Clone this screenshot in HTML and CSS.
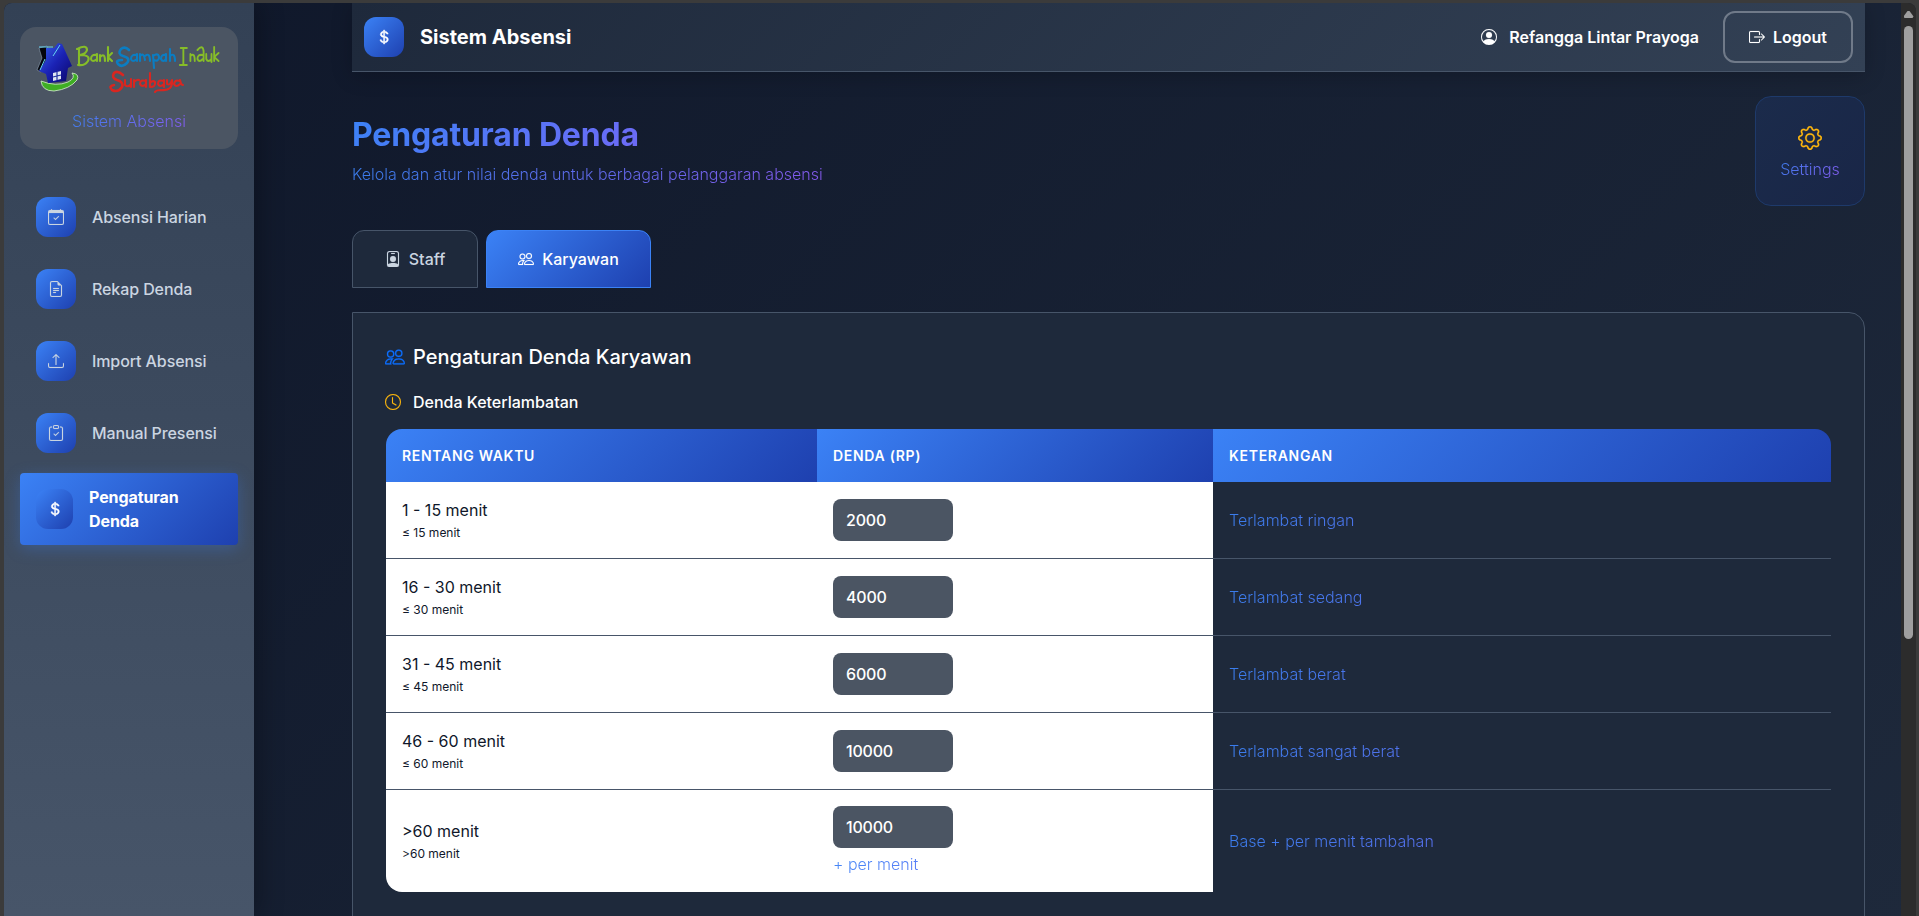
FILE: index.html
```html
<!DOCTYPE html>
<html lang="id">
<head>
<meta charset="utf-8">
<title>Pengaturan Denda</title>
<link rel="stylesheet" href="styles.css">
</head>
<body>
<svg class="sprite" aria-hidden="true">
  <symbol id="dollar" viewBox="0 0 16 16"><path d="M4 10.781c.148 1.667 1.513 2.85 3.591 3.003V15h1.043v-1.216c2.27-.179 3.678-1.438 3.678-3.3 0-1.59-.947-2.51-2.956-3.028l-.722-.187V3.467c1.122.11 1.879.714 2.07 1.616h1.47c-.166-1.6-1.54-2.748-3.54-2.875V1H7.591v1.233c-1.939.23-3.27 1.472-3.27 3.156 0 1.454.966 2.483 2.661 2.917l.61.162v4.031c-1.149-.17-1.94-.8-2.131-1.718H4zm3.391-3.836c-1.043-.263-1.6-.825-1.6-1.616 0-.944.704-1.641 1.8-1.828v3.495l-.2-.05zm1.591 1.872c1.287.323 1.852.859 1.852 1.769 0 1.097-.826 1.828-2.2 1.939V8.73l.348.086z"/></symbol>
  <symbol id="calendar" viewBox="0 0 16 16"><path d="M10.854 7.146a.5.5 0 0 1 0 .708l-3 3a.5.5 0 0 1-.708 0l-1.5-1.5a.5.5 0 1 1 .708-.708L7.5 9.793l2.646-2.647a.5.5 0 0 1 .708 0z"/><path d="M3.5 0a.5.5 0 0 1 .5.5V1h8V.5a.5.5 0 0 1 1 0V1h1a2 2 0 0 1 2 2v11a2 2 0 0 1-2 2H2a2 2 0 0 1-2-2V3a2 2 0 0 1 2-2h1V.5a.5.5 0 0 1 .5-.5zM1 4v10a1 1 0 0 0 1 1h12a1 1 0 0 0 1-1V4H1z"/></symbol>
  <symbol id="file" viewBox="0 0 16 16"><path d="M5.5 7a.5.5 0 0 0 0 1h5a.5.5 0 0 0 0-1h-5zM5 9.5a.5.5 0 0 1 .5-.5h5a.5.5 0 0 1 0 1h-5a.5.5 0 0 1-.5-.5zm0 2a.5.5 0 0 1 .5-.5h2a.5.5 0 0 1 0 1h-2a.5.5 0 0 1-.5-.5z"/><path d="M9.5 0H4a2 2 0 0 0-2 2v12a2 2 0 0 0 2 2h8a2 2 0 0 0 2-2V4.5L9.5 0zm0 1v2A1.5 1.5 0 0 0 11 4.5h2V14a1 1 0 0 1-1 1H4a1 1 0 0 1-1-1V2a1 1 0 0 1 1-1h5.5z"/></symbol>
  <symbol id="upload" viewBox="0 0 16 16"><path d="M.5 9.9a.5.5 0 0 1 .5.5v2.5a1 1 0 0 0 1 1h12a1 1 0 0 0 1-1v-2.5a.5.5 0 0 1 1 0v2.5a2 2 0 0 1-2 2H2a2 2 0 0 1-2-2v-2.5a.5.5 0 0 1 .5-.5z"/><path d="M7.646 1.146a.5.5 0 0 1 .708 0l3 3a.5.5 0 0 1-.708.708L8.5 2.707V11.5a.5.5 0 0 1-1 0V2.707L5.354 4.854a.5.5 0 1 1-.708-.708l3-3z"/></symbol>
  <symbol id="clipboard" viewBox="0 0 16 16"><path d="M10.854 7.146a.5.5 0 0 1 0 .708l-3 3a.5.5 0 0 1-.708 0l-1.5-1.5a.5.5 0 1 1 .708-.708L7.5 9.793l2.646-2.647a.5.5 0 0 1 .708 0z"/><path d="M4 1.5H3a2 2 0 0 0-2 2V14a2 2 0 0 0 2 2h10a2 2 0 0 0 2-2V3.5a2 2 0 0 0-2-2h-1v1h1a1 1 0 0 1 1 1V14a1 1 0 0 1-1 1H3a1 1 0 0 1-1-1V3.5a1 1 0 0 1 1-1h1v-1z"/><path d="M9.5 1a.5.5 0 0 1 .5.5v1a.5.5 0 0 1-.5.5h-3a.5.5 0 0 1-.5-.5v-1a.5.5 0 0 1 .5-.5h3zm-3-1A1.5 1.5 0 0 0 5 1.5v1A1.5 1.5 0 0 0 6.5 4h3A1.5 1.5 0 0 0 11 2.5v-1A1.5 1.5 0 0 0 9.5 0h-3z"/></symbol>
  <symbol id="person" viewBox="0 0 16 16"><path d="M11 6a3 3 0 1 1-6 0 3 3 0 0 1 6 0z"/><path fill-rule="evenodd" d="M0 8a8 8 0 1 1 16 0A8 8 0 0 1 0 8zm8-7a7 7 0 0 0-5.468 11.37C3.242 11.226 4.805 10 8 10s4.757 1.225 5.468 2.37A7 7 0 0 0 8 1z"/></symbol>
  <symbol id="logout" viewBox="0 0 16 16"><path d="M10 12.5a.5.5 0 0 1-.5.5h-8a.5.5 0 0 1-.5-.5v-9a.5.5 0 0 1 .5-.5h8a.5.5 0 0 1 .5.5v2a.5.5 0 0 0 1 0v-2A1.5 1.5 0 0 0 9.5 2h-8A1.5 1.5 0 0 0 0 3.5v9A1.5 1.5 0 0 0 1.5 14h8a1.5 1.5 0 0 0 1.5-1.5v-2a.5.5 0 0 0-1 0v2z"/><path d="M15.854 8.354a.5.5 0 0 0 0-.708l-3-3a.5.5 0 0 0-.708.708L14.293 7.5H5.5a.5.5 0 0 0 0 1h8.793l-2.147 2.146a.5.5 0 0 0 .708.708l3-3z"/></symbol>
  <symbol id="gear" viewBox="0 0 16 16"><path d="M8 4.754a3.246 3.246 0 1 0 0 6.492 3.246 3.246 0 0 0 0-6.492zM5.754 8a2.246 2.246 0 1 1 4.492 0 2.246 2.246 0 0 1-4.492 0z"/><path d="M9.796 1.343c-.527-1.79-3.065-1.79-3.592 0l-.094.319a.873.873 0 0 1-1.255.52l-.292-.16c-1.64-.892-3.433.902-2.54 2.541l.159.292a.873.873 0 0 1-.52 1.255l-.319.094c-1.79.527-1.79 3.065 0 3.592l.319.094a.873.873 0 0 1 .52 1.255l-.16.292c-.892 1.64.901 3.434 2.541 2.54l.292-.159a.873.873 0 0 1 1.255.52l.094.319c.527 1.79 3.065 1.79 3.592 0l.094-.319a.873.873 0 0 1 1.255-.52l.292.16c1.64.893 3.434-.902 2.54-2.541l-.159-.292a.873.873 0 0 1 .52-1.255l.319-.094c1.79-.527 1.79-3.065 0-3.592l-.319-.094a.873.873 0 0 1-.52-1.255l.16-.292c.893-1.64-.902-3.433-2.541-2.54l-.292.159a.873.873 0 0 1-1.255-.52l-.094-.319zm-2.633.283c.246-.835 1.428-.835 1.674 0l.094.319a1.873 1.873 0 0 0 2.693 1.115l.291-.16c.764-.415 1.6.42 1.184 1.185l-.159.292a1.873 1.873 0 0 0 1.116 2.692l.318.094c.835.246.835 1.428 0 1.674l-.319.094a1.873 1.873 0 0 0-1.115 2.693l.16.291c.415.764-.42 1.6-1.185 1.184l-.291-.159a1.873 1.873 0 0 0-2.693 1.116l-.094.318c-.246.835-1.428.835-1.674 0l-.094-.319a1.873 1.873 0 0 0-2.692-1.115l-.292.16c-.764.415-1.6-.42-1.184-1.185l.159-.291A1.873 1.873 0 0 0 1.945 8.93l-.319-.094c-.835-.246-.835-1.428 0-1.674l.319-.094A1.873 1.873 0 0 0 3.06 4.377l-.16-.292c-.415-.764.42-1.6 1.185-1.184l.292.159a1.873 1.873 0 0 0 2.692-1.115l.094-.319z"/></symbol>
  <symbol id="badge" viewBox="0 0 16 16"><path d="M6.5 2a.5.5 0 0 0 0 1h3a.5.5 0 0 0 0-1h-3zM11 8a3 3 0 1 1-6 0 3 3 0 0 1 6 0z"/><path d="M4.5 0A2.5 2.5 0 0 0 2 2.5V14a2 2 0 0 0 2 2h8a2 2 0 0 0 2-2V2.5A2.5 2.5 0 0 0 11.5 0h-7zM3 2.5A1.5 1.5 0 0 1 4.5 1h7A1.5 1.5 0 0 1 13 2.5v10.795a4.2 4.2 0 0 0-.776-.492C11.392 12.387 10.063 12 8 12s-3.392.387-4.224.803a4.2 4.2 0 0 0-.776.492V2.5z"/></symbol>
  <symbol id="people" viewBox="0 0 16 16"><path d="M15 14s1 0 1-1-1-4-5-4-5 3-5 4 1 1 1 1h8zm-7.978-1A.261.261 0 0 1 7 12.996c.001-.264.167-1.03.76-1.72C8.312 10.629 9.282 10 11 10c1.717 0 2.687.63 3.24 1.276.593.69.758 1.457.76 1.72l-.008.002a.274.274 0 0 1-.014.002H7.022zM11 7a2 2 0 1 0 0-4 2 2 0 0 0 0 4zm3-2a3 3 0 1 1-6 0 3 3 0 0 1 6 0zM6.936 9.28a5.88 5.88 0 0 0-1.23-.247A7.35 7.35 0 0 0 5 9c-4 0-5 3-5 4 0 .667.333 1 1 1h4.216A2.238 2.238 0 0 1 5 13c0-1.01.377-2.042 1.09-2.904.243-.294.526-.569.846-.816zM4.92 10A5.493 5.493 0 0 0 4 13H1c0-.26.164-1.03.76-1.724.545-.636 1.492-1.256 3.16-1.275zM1.5 5.5a3 3 0 1 1 6 0 3 3 0 0 1-6 0zm3-2a2 2 0 1 0 0 4 2 2 0 0 0 0-4z"/></symbol>
  <symbol id="clock" viewBox="0 0 16 16"><path d="M8 3.5a.5.5 0 0 0-1 0V9a.5.5 0 0 0 .252.434l3.5 2a.5.5 0 0 0 .496-.868L8 8.71V3.5z"/><path d="M8 16A8 8 0 1 0 8 0a8 8 0 0 0 0 16zm7-8A7 7 0 1 1 1 8a7 7 0 0 1 14 0z"/></symbol>
</svg>

<div class="window">
  <aside class="sidebar">
    <div class="brand">
      <svg class="brand-logo" viewBox="0 0 186 54" width="186" height="54">
        <defs>
          <linearGradient id="house" x1="0" y1="0" x2="1" y2="1"><stop offset="0" stop-color="#3a66f0"/><stop offset=".5" stop-color="#1a22b4"/><stop offset="1" stop-color="#0b0668"/></linearGradient>
        </defs>
        <path d="M5 39 Q6 49 18 49 Q34 47 41 38 Q44 32 36 31 Q40 36 32 40 Q20 45 5 39Z" fill="#3fae24" stroke="#d5efd0" stroke-width=".8"/>
        <path d="M3 6 L11 4 L11 16 L5 30 L1 28 L6 16Z" fill="#04050c" stroke="#9fb4c8" stroke-width=".5"/>
        <path d="M3 29 L10 18 L10 6 L18 6 L22 1 L26 2 L36 24 L32 26 L30 39 L12 41 L10 32Z" fill="url(#house)"/>
        <path d="M3 5 L17 5 M24 3 L17 14 M9 17 L4 28" stroke="#66d4f2" stroke-width="1" fill="none"/>
        <path d="M17 31 L25 29 L25 37 L17 39Z" fill="#dfe6f2"/>
        <path d="M21 30 V38 M17 35 L25 33" stroke="#2030a0" stroke-width="1.2"/>
        <g fill="none" stroke-linecap="round" stroke-linejoin="round" stroke-width="2.1">
          <g stroke="#86bd28">
            <path d="M43 6V23M41 7Q51 2 51 8Q50 12 44 13Q55 13 52 19Q49 24 42 23"/>
            <path d="M61 13Q55 12 55 17Q56 21 61 17M61 12V19M64 13V19M64 15Q69 10 69 19M72 5V19M76 11L72 15L76 19"/>
            <g transform="translate(18 0) scale(.88 1)">
              <path d="M144 6H151M147 6V23M143 23H151"/>
              <path d="M155 12V19M155 14Q160 10 160 19M169 13Q163 12 163 17Q165 21 169 17M163 8Q169 2 170 9V19M173 12V17Q175 21 179 17V12M179 17V20M182 5V19M187 11L182 15L187 19"/>
            </g>
          </g>
          <g stroke="#0b7dc2">
            <path stroke-width="2.6" d="M93 8Q89 4 85 7Q81 12 87 14Q95 16 91 21Q86 26 82 22Q79 18 86 18"/>
            <path d="M101 13Q95 12 95 17Q96 21 101 17M101 12V19M104 12V19M104 14Q108 10 109 18M109 14Q114 10 114 19M117 13L118 26M117 14Q123 10 123 16Q122 20 118 18M130 13Q125 12 125 17Q127 21 130 17M130 12V19M134 7V19M134 14Q139 10 139 19"/>
          </g>
          <g stroke="#d92620">
            <path stroke-width="2.6" d="M87 33Q82 28 78 31Q75 36 81 38Q88 40 86 45Q82 51 76 48Q72 44 78 43"/>
            <path d="M89 38V43Q92 46 95 42V37M95 42V45M98 38V45M98 40Q101 37 103 38M110 39Q104 37 104 42Q106 46 110 42M110 38V45M114 31V45Q120 45 119 40Q117 38 114 41M128 39Q122 37 122 42Q124 46 128 42M128 38V45M131 38V42Q134 44 136 38Q137 49 126 48Q120 48 119 50M144 39Q139 37 138 42Q140 46 144 42M144 38Q145 43 147 43"/>
          </g>
        </g>
      </svg>
      <p class="brand-name fade-text">Sistem Absensi</p>
    </div>
    <nav class="nav">
      <a class="nav-item"><span class="tile"><svg class="icon"><use href="#calendar"/></svg></span>Absensi Harian</a>
      <a class="nav-item"><span class="tile"><svg class="icon"><use href="#file"/></svg></span>Rekap Denda</a>
      <a class="nav-item"><span class="tile"><svg class="icon"><use href="#upload"/></svg></span>Import Absensi</a>
      <a class="nav-item"><span class="tile"><svg class="icon"><use href="#clipboard"/></svg></span>Manual Presensi</a>
      <a class="nav-item active"><span class="tile"><svg class="icon heavy"><use href="#dollar"/></svg></span><span class="nav-label">Pengaturan Denda</span></a>
    </nav>
  </aside>

  <main class="main">
    <header class="topbar">
      <span class="tile"><svg class="icon heavy"><use href="#dollar"/></svg></span>
      <span class="topbar-title">Sistem Absensi</span>
      <span class="user"><svg class="icon"><use href="#person"/></svg>Refangga Lintar Prayoga</span>
      <button class="logout"><svg class="icon"><use href="#logout"/></svg>Logout</button>
    </header>

    <section class="page-head">
      <div class="page-title">
        <h1>Pengaturan Denda</h1>
        <p class="fade-text">Kelola dan atur nilai denda untuk berbagai pelanggaran absensi</p>
      </div>
      <div class="settings">
        <svg class="icon"><use href="#gear"/></svg>
        <span class="fade-text">Settings</span>
      </div>
    </section>

    <div class="tabs">
      <button class="tab"><svg class="icon"><use href="#badge"/></svg>Staff</button>
      <button class="tab selected"><svg class="icon"><use href="#people"/></svg>Karyawan</button>
    </div>

    <section class="card">
      <h2><svg class="icon"><use href="#people"/></svg>Pengaturan Denda Karyawan</h2>
      <h3><svg class="icon"><use href="#clock"/></svg>Denda Keterlambatan</h3>
      <table class="fines">
        <colgroup><col class="col-range"><col class="col-fine"><col></colgroup>
        <thead><tr><th>Rentang Waktu</th><th>Denda (Rp)</th><th>Keterangan</th></tr></thead>
        <tbody>
          <tr><td>1 - 15 menit<small>≤ 15 menit</small></td><td><input value="2000"></td><td><span class="fade-text note">Terlambat ringan</span></td></tr>
          <tr><td>16 - 30 menit<small>≤ 30 menit</small></td><td><input value="4000"></td><td><span class="fade-text note">Terlambat sedang</span></td></tr>
          <tr><td>31 - 45 menit<small>≤ 45 menit</small></td><td><input value="6000"></td><td><span class="fade-text note">Terlambat berat</span></td></tr>
          <tr><td>46 - 60 menit<small>≤ 60 menit</small></td><td><input value="10000"></td><td><span class="fade-text note">Terlambat sangat berat</span></td></tr>
          <tr class="last"><td>&gt;60 menit<small>&gt;60 menit</small></td><td><input value="10000"><span class="fade-text note">+ per menit</span></td><td><span class="fade-text note">Base + per menit tambahan</span></td></tr>
        </tbody>
      </table>
    </section>
  </main>

  <div class="scrollbar"><span class="arrow"></span><span class="thumb"></span></div>
</div>
</body>
</html>
```

FILE: styles.css
```css
* { box-sizing: border-box; }

body {
  margin: 0;
  height: 916px;
  overflow: hidden;
  padding: 3px 3px 0 4px;
  background: #3b3b3b;
  font: 400 16px/24px Inter, "Liberation Sans", sans-serif;
  color: #fff;
}

h1, h2, h3, p { margin: 0; }
button, input { font: inherit; color: inherit; }

.sprite { position: absolute; width: 0; height: 0; }
.icon { display: block; flex: none; width: 16px; height: 16px; fill: currentColor; stroke: currentColor; stroke-width: .15; }
.icon.heavy { stroke-width: .5; }

.window {
  display: flex;
  height: 913px;
  border-radius: 8px 8px 0 0;
  overflow: hidden;
  background: linear-gradient(135deg, #0f172a 0%, #1e293b 100%);
}

.fade-text {
  font-weight: 300;
  background: linear-gradient(135deg, #3b82f6 0%, #8b5cf6 100%);
  -webkit-background-clip: text;
  background-clip: text;
  color: transparent;
  opacity: .95;
}

.tile {
  display: flex;
  align-items: center;
  justify-content: center;
  width: 40px;
  height: 40px;
  border-radius: 12px;
  background: linear-gradient(135deg, #3b82f6, #1e40af);
}

/* Sidebar */
.sidebar {
  flex: none;
  width: 250px;
  padding: 24px 16px;
  background: linear-gradient(180deg, #334155 0%, #475569 100%);
  box-shadow: 4px 0 24px rgba(0, 0, 0, .3);
}
.brand {
  display: flex;
  flex-direction: column;
  align-items: center;
  gap: 13px;
  height: 122px;
  margin-bottom: 32px;
  padding-top: 15px;
  border-radius: 16px;
  background: #4b5563;
}
.brand-logo { flex: none; overflow: visible; }
.nav-item {
  display: flex;
  align-items: center;
  gap: 16px;
  height: 72px;
  padding: 0 16px;
  color: #cbd5e1;
  font-weight: 500;
  letter-spacing: -.1px;
}
.nav-item.active {
  margin-top: 4px;
  border-radius: 4px;
  background: linear-gradient(135deg, #3b82f6, #1e40af);
  box-shadow: 0 4px 16px rgba(59, 130, 246, .3);
  color: #fff;
  font-weight: 700;
}
.nav-item.active .tile { width: 37px; }
.nav-label { width: 133px; }

/* Main column */
.main {
  flex: 1;
  min-width: 0;
  display: flex;
  flex-direction: column;
  padding: 0 36px 0 98px;
}
.topbar {
  flex: none;
  display: flex;
  align-items: center;
  height: 69px;
  padding: 0 12px;
  border-bottom: 1px solid #475569;
  background: linear-gradient(135deg, #1e293b 0%, #334155 100%);
  box-shadow: 0 4px 20px rgba(0, 0, 0, .2);
}
.topbar-title { margin-left: 16px; font-size: 20px; font-weight: 700; }
.user { display: flex; align-items: center; gap: 12px; margin-left: auto; font-weight: 600; }
.logout {
  display: flex;
  align-items: center;
  justify-content: center;
  gap: 8px;
  width: 130px;
  height: 52px;
  margin-left: 24px;
  border: 2px solid #707a89;
  border-radius: 12px;
  background: none;
  font-weight: 600;
}

.page-head {
  flex: none;
  display: flex;
  justify-content: space-between;
  align-items: flex-start;
  margin-top: 24px;
}
.page-title { padding-top: 20px; }
.page-title h1 {
  margin-bottom: 8px;
  font-size: 32px;
  font-weight: 700;
  letter-spacing: -.15px;
  line-height: 38px;
  background: linear-gradient(135deg, #3b82f6 0%, #8b5cf6 100%);
  -webkit-background-clip: text;
  background-clip: text;
  color: transparent;
}
.settings {
  display: flex;
  flex-direction: column;
  align-items: center;
  gap: 7px;
  width: 110px;
  height: 110px;
  padding-top: 29px;
  border: 1px solid #1e3a6b;
  border-radius: 16px;
  background: linear-gradient(135deg, #1b2b4b, #192647);
}
.settings .icon { width: 24px; height: 24px; color: #ffb80f; }

.tabs { flex: none; display: flex; gap: 8px; margin-top: 24px; }
.tab {
  display: flex;
  align-items: center;
  justify-content: center;
  gap: 8px;
  width: 126px;
  height: 58px;
  padding: 0;
  border: 1px solid #475569;
  border-radius: 12px 12px 0 0;
  background: #1e293b;
  color: #cbd5e1;
  font-weight: 500;
}
.tab.selected {
  width: 165px;
  border-color: #3b82f6;
  background: linear-gradient(135deg, #3b82f6, #1e40af);
  color: #fff;
}

/* Fine settings card */
.card {
  flex: none;
  height: 700px;
  margin-top: 24px;
  padding: 32px 33px 0;
  border: 1px solid #475569;
  border-radius: 0 16px 16px 16px;
  background: #1e293b;
}
.card h2, .card h3 { display: flex; align-items: center; margin-left: -1px; font-weight: 500; }
.card h2 { gap: 8px; font-size: 20px; }
.card h2 .icon { width: 20px; height: 20px; color: #0d6efd; }
.card h3 { gap: 12px; margin-top: 21px; font-size: 16px; }
.card h3 .icon { color: #ffb80f; }

.fines {
  width: 100%;
  margin-top: 15px;
  table-layout: fixed;
  border-collapse: separate;
  border-spacing: 0;
  border-radius: 16px;
  overflow: hidden;
}
.col-range { width: 431px; }
.col-fine { width: 396px; }
.fines th {
  height: 53px;
  padding: 0 16px;
  background: linear-gradient(135deg, #3b82f6, #1e40af);
  font-size: 14px;
  font-weight: 600;
  letter-spacing: .7px;
  text-align: left;
  text-transform: uppercase;
}
.fines td {
  height: 77px;
  padding: 0 16px;
  border-bottom: 1px solid #475569;
  color: #0f172a;
}
.fines td:not(:last-child) { background: #fff; }
.fines .last td { height: 102px; border-bottom: 0; }
.fines small { display: block; font-size: 12px; line-height: 21px; }
.fines input {
  display: block;
  width: 120px;
  height: 42px;
  padding: 0 13px;
  border: 0;
  border-radius: 8px;
  background: #4b5563;
  color: #fff;
  font-weight: 500;
  letter-spacing: -.2px;
}
.note { display: block; }
.fines input + .note { margin-top: 4px; }

/* Scrollbar */
.scrollbar {
  flex: none;
  display: flex;
  flex-direction: column;
  align-items: center;
  width: 15px;
  padding-top: 8px;
  background: #2c2c2c;
}
.arrow {
  width: 10px;
  height: 7px;
  background: #9f9f9f;
  clip-path: polygon(40% 0, 60% 0, 100% 80%, 90% 100%, 10% 100%, 0 80%);
}
.thumb { width: 9px; height: 613px; margin-top: 8px; border-radius: 5px; background: #9f9f9f; }
```
